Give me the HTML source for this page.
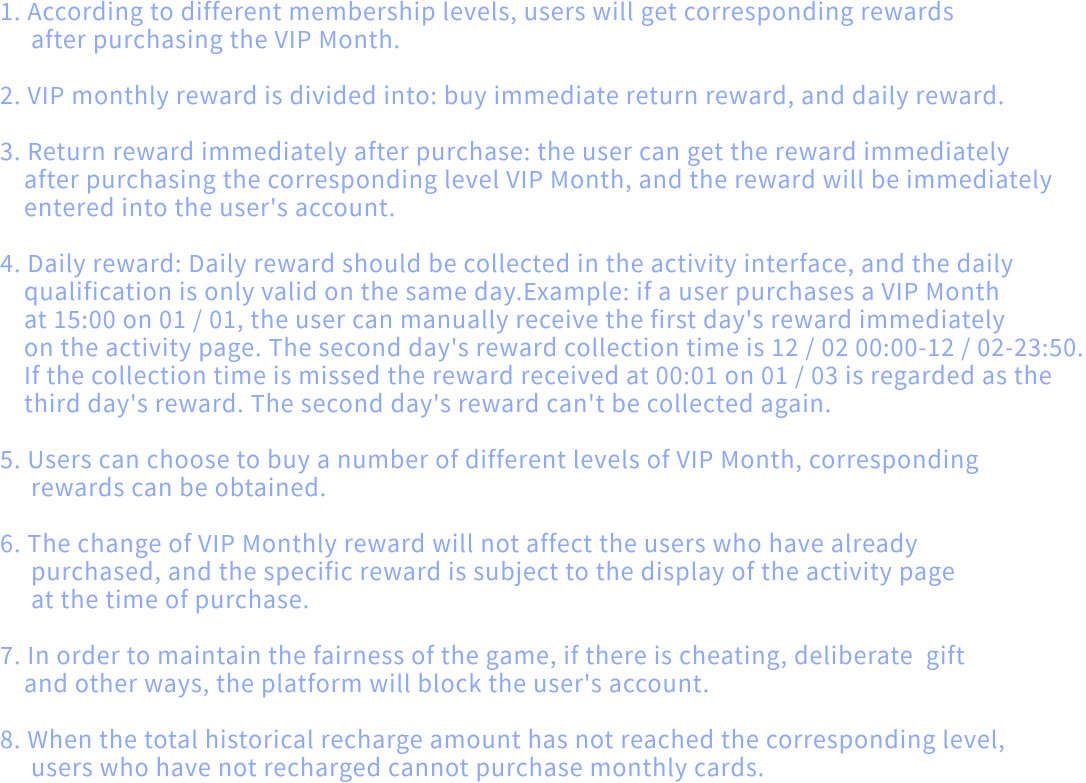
<!DOCTYPE html>
<html><head><meta charset="utf-8"><style>
html,body{margin:0;padding:0;background:#fff;width:1086px;height:782px;overflow:hidden}
pre{margin:0;position:absolute;left:0;top:-4px;font-family:"Noto Sans CJK SC","Liberation Sans",sans-serif;font-size:23.5px;letter-spacing:0.85px;line-height:28px;color:#8ea8f8;white-space:pre}
i{display:inline-block;font-style:normal}
.a{width:31px}.b{width:24px}
</style></head><body>
<pre>1. According to different membership levels, users will get corresponding rewards
<i class="a"></i>after purchasing the VIP Month.

2. VIP monthly reward is divided into: buy immediate return reward, and daily reward.

3. Return reward immediately after purchase: the user can get the reward immediately
<i class="b"></i>after purchasing the corresponding level VIP Month, and the reward will be immediately
<i class="b"></i>entered into the user's account.

4. Daily reward: Daily reward should be collected in the activity interface, and the daily
<i class="b"></i>qualification is only valid on the same day.Example: if a user purchases a VIP Month
<i class="b"></i>at 15:00 on 01 / 01, the user can manually receive the first day's reward immediately
<i class="b"></i>on the activity page. The second day's reward collection time is 12 / 02 00:00-12 / 02-23:50.
<i class="b"></i>If the collection time is missed the reward received at 00:01 on 01 / 03 is regarded as the
<i class="b"></i>third day's reward. The second day's reward can't be collected again.

5. Users can choose to buy a number of different levels of VIP Month, corresponding
<i class="a"></i>rewards can be obtained.

6. The change of VIP Monthly reward will not affect the users who have already
<i class="a"></i>purchased, and the specific reward is subject to the display of the activity page
<i class="a"></i>at the time of purchase.

7. In order to maintain the fairness of the game, if there is cheating, deliberate  gift
<i class="b"></i>and other ways, the platform will block the user's account.

8. When the total historical recharge amount has not reached the corresponding level,
<i class="a"></i>users who have not recharged cannot purchase monthly cards.</pre>
</body></html>
